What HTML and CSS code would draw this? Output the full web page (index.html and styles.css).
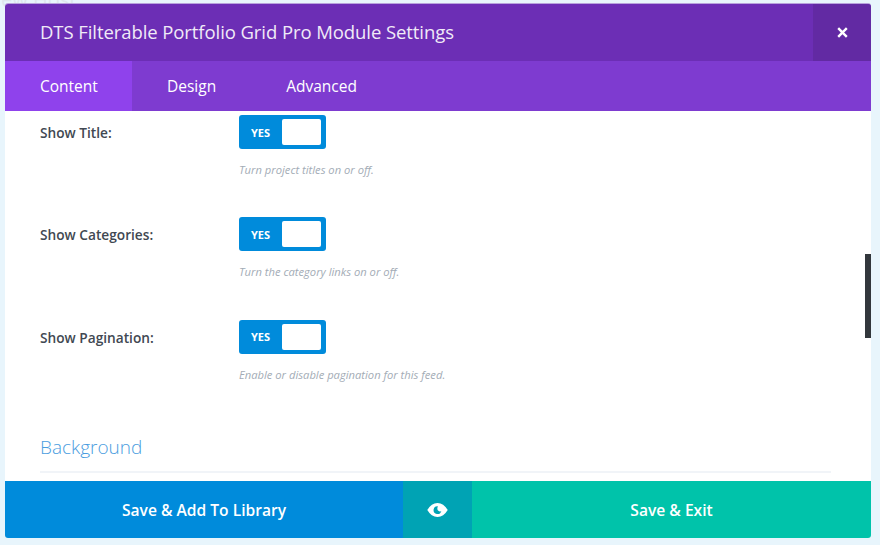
FILE: index.html
```html
<!DOCTYPE html>
<html lang="en">
<head>
<meta charset="utf-8">
<title>Module Settings</title>
<link rel="stylesheet" href="styles.css">
</head>
<body>
<div class="ghost ghost-top">New Host</div>
<main class="modal">
  <header class="head">
    <h1 class="title">DTS Filterable Portfolio Grid Pro Module Settings</h1>
    <button class="close" aria-label="Close">
      <svg width="11" height="11" viewBox="0 0 11 11"><path d="M1.2 1.2 9.8 9.8M9.8 1.2 1.2 9.8" stroke="#fff" stroke-width="2.4" fill="none"/></svg>
    </button>
  </header>
  <nav class="tabs">
    <a class="tab active">Content</a>
    <a class="tab">Design</a>
    <a class="tab">Advanced</a>
  </nav>
  <section class="body">
    <div class="scrollbar"></div>
    <div class="row">
      <label class="label">Show Title:</label>
      <div class="field">
        <div class="toggle"><span class="yes">YES</span><span class="knob"></span></div>
        <p class="hint">Turn project titles on or off.</p>
      </div>
    </div>
    <div class="row">
      <label class="label">Show Categories:</label>
      <div class="field">
        <div class="toggle"><span class="yes">YES</span><span class="knob"></span></div>
        <p class="hint">Turn the category links on or off.</p>
      </div>
    </div>
    <div class="row">
      <label class="label">Show Pagination:</label>
      <div class="field">
        <div class="toggle"><span class="yes">YES</span><span class="knob"></span></div>
        <p class="hint">Enable or disable pagination for this feed.</p>
      </div>
    </div>
    <h2 class="group">Background</h2>
  </section>
  <footer class="foot">
    <button class="btn save-lib">Save &amp; Add To Library</button>
    <button class="btn preview" aria-label="Preview">
      <svg width="21" height="16" viewBox="0 0 21 16"><path d="M0.3 8C3 3.4 6.4 1 10.5 1S18 3.4 20.7 8C18 12.6 14.600 15 10.500 15S3 12.600 0.3 8Z" fill="#fff"/><path d="M10.900 4.200A3.900 3.900 0 1 0 14.300 8.900C13 9.700 11.800 9.500 11 8.600 10.200 7.700 10.100 5.800 10.900 4.200Z" fill="#00a3b4"/></svg>
    </button>
    <button class="btn save-exit">Save &amp; Exit</button>
  </footer>
</main>
</body>
</html>
```

FILE: styles.css
```css
* { box-sizing: border-box; }
html, body { margin: 0; height: 100%; }
body {
  position: relative;
  overflow: hidden;
  padding: 4px 9px 7px 5px;
  background: #e8f5fc;
  font-family: "Open Sans", "Liberation Sans", sans-serif;
}
.ghost { position: absolute; color: #dde7ed; }
.ghost-top { left: -14px; top: -14px; font-size: 20px; }
.modal {
  position: relative;
  display: flex;
  flex-direction: column;
  height: 534px;
  background: #fff;
  border-radius: 3px;
  box-shadow: 0 -1px 0 #b8a2dc;
}
.head {
  display: flex;
  align-items: stretch;
  justify-content: space-between;
  flex: none;
  height: 57px;
  background: #6c2eb5;
  border-radius: 3px 3px 0 0;
}
.title {
  margin: 0;
  padding-left: 35px;
  color: #fff;
  font-size: 18.500px;
  font-weight: 400;
  line-height: 55px;
  opacity: .9;
  letter-spacing: -.08px;
}
.close {
  width: 58px;
  padding: 0;
  border: 0;
  background: #622aa3;
  border-radius: 0 3px 0 0;
  display: flex;
  align-items: center;
  justify-content: center;
}
.tabs {
  display: flex;
  flex: none;
  height: 50px;
  background: #7e3bd0;
}
.tab {
  color: #fff;
  font-size: 15.500px;
  line-height: 50px;
}
.tab.active { padding: 0 35px; width: 127px; background: #8f42ec; }
.tab + .tab { margin-left: 35px; }
.tab + .tab + .tab { margin-left: 70px; }
.body {
  position: relative;
  flex: 1;
  min-height: 0;
  overflow: hidden;
  padding: 4px 40px 0 35px;
}
.scrollbar {
  position: absolute;
  right: 0;
  top: 143px;
  width: 6px;
  height: 84px;
  background: #32373c;
}
.row {
  display: flex;
  height: 102.400px;
}
.label {
  width: 199px;
  padding-top: 8px;
  color: #414852;
  font-size: 13.700px;
  font-weight: 600;
  line-height: 19px;
}
.field { flex: 1; }
.toggle {
  display: flex;
  align-items: center;
  justify-content: space-between;
  width: 87px;
  height: 34px;
  padding: 0 5px 0 12px;
  background: #008bdb;
  border-radius: 3px;
}
.yes {
  color: #fff;
  font-size: 11px;
  font-weight: 700;
}
.knob {
  width: 39px;
  height: 26px;
  background: #fff;
  border-radius: 2px;
}
.hint {
  margin: 13px 0 0;
  color: #a3acb6;
  font-size: 11.200px;
  font-style: italic;
  line-height: 16px;
}
.group {
  margin: 12px 0 0;
  padding-bottom: 10px;
  border-bottom: 2px solid #f1f4f8;
  color: #4a9de0;
  font-size: 19px;
  font-weight: 300;
  line-height: 27px;
}
.foot {
  position: relative;
  display: flex;
  flex: none;
  height: 57px;
  box-shadow: 0 -1px 0 rgba(255, 255, 255, .45);
  border-radius: 0 0 3px 3px;
  overflow: hidden;
}
.btn {
  padding: 0;
  border: 0;
  color: #fff;
  font-family: inherit;
  font-size: 15.600px;
  font-weight: 600;
  display: flex;
  align-items: center;
  justify-content: center;
}
.save-lib { width: 398px; background: #008bdb; }
.preview { width: 69px; background: #00a3b4; }
.save-exit { flex: 1; background: #00c3aa; }
```
